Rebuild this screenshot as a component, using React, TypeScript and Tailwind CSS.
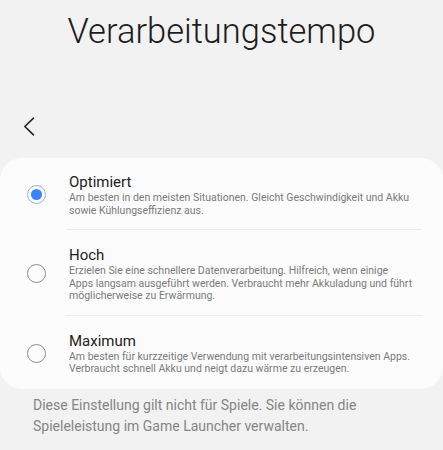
const options = [
  {
    title: "Optimiert",
    desc: "Am besten in den meisten Situationen. Gleicht Geschwindigkeit und Akku sowie Kühlungseffizienz aus.",
    pad: "pt-[14px] pb-[12px]",
  },
  {
    title: "Hoch",
    desc: "Erzielen Sie eine schnellere Datenverarbeitung. Hilfreich, wenn einige\nApps langsam ausgeführt werden. Verbraucht mehr Akkuladung und führt möglicherweise zu Erwärmung.",
    pad: "pt-[15px] pb-[12px]",
  },
  {
    title: "Maximum",
    desc: "Am besten für kurzzeitige Verwendung mit verarbeitungsintensiven Apps. Verbraucht schnell Akku und neigt dazu wärme zu erzeugen.",
    pad: "pt-[15px] pb-[13px]",
  },
];

const Radio = ({ checked }: { checked: boolean }) =>
  checked ? (
    <span className="w-[19px] h-[19px] rounded-full border-[1.5px] border-[#8db5f7] flex items-center justify-center shrink-0">
      <span className="w-[11px] h-[11px] rounded-full bg-[#3b82f6]" />
    </span>
  ) : (
    <span className="w-[19px] h-[19px] rounded-full border-[1.5px] border-[#8e8e8e] shrink-0" />
  );

export default function App() {
  const selected = 0;

  return (
    <div className="w-[443px] h-[450px] bg-[#f2f2f2] overflow-hidden font-['Roboto',sans-serif]">
      <h1 className="pt-[13px] text-center text-[34.5px] leading-[36px] font-light text-[#1d1d1d]">
        Verarbeitungstempo
      </h1>
      <div className="mt-[68px] pl-[23px] h-[19px] flex items-center">
        <svg width="12" height="19" viewBox="0 0 12 19" fill="none">
          <path d="M10.5 1.2 L1.8 9.5 L10.5 17.8" stroke="#222" strokeWidth="1.6" strokeLinecap="round" strokeLinejoin="round" />
        </svg>
      </div>
      <div className="mt-[22px] bg-[#fcfcfc] rounded-[22px]">
        {options.map((o, i) => (
          <div key={o.title}>
            {i > 0 && <div className="ml-[66px] mr-[21px] h-px bg-[#ececec]" />}
            <div className={`flex items-center pl-[27px] pr-[18px] ${o.pad}`}>
              <Radio checked={i === selected} />
              <div className="ml-[23px]">
                <div className="text-[15px] leading-[20px] text-[#222]">{o.title}</div>
                <div className="text-[10.5px] leading-[12.5px] text-[#7a7a7a] whitespace-pre-line">{o.desc}</div>
              </div>
            </div>
          </div>
        ))}
      </div>
      <p className="mt-[6px] px-[33px] text-[14px] leading-[21px] text-[#858585]">
        Diese Einstellung gilt nicht für Spiele. Sie können die Spieleleistung im Game Launcher verwalten.
      </p>
    </div>
  );
}
